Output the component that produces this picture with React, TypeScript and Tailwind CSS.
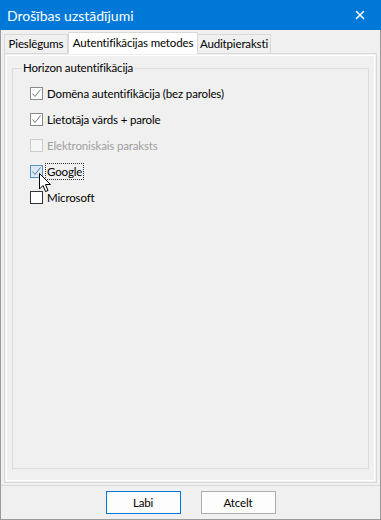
import { IoClose } from "react-icons/io5";

type Item = { label: string; checked: boolean; disabled?: boolean; hover?: boolean; focus?: boolean };

const items: Item[] = [
  { label: "Domēna autentifikācija (bez paroles)", checked: true },
  { label: "Lietotāja vārds + parole", checked: true },
  { label: "Elektroniskais paraksts", checked: false, disabled: true },
  { label: "Google", checked: true, hover: true, focus: true },
  { label: "Microsoft", checked: false },
];

function Check({ item }: { item: Item }) {
  const box = item.disabled
    ? "border-[#cccccc] bg-[#f5f5f5]"
    : item.hover
      ? "border-[#5a8fc4] bg-[#dbe7f3]"
      : item.checked
        ? "border-[#8a8a8a] bg-white"
        : "border-[#333333] bg-white";
  return (
    <div className={"w-[13px] h-[13px] shrink-0 border flex items-center justify-center " + box}>
      {item.checked && (
        <svg width="11" height="11" viewBox="0 0 11 11">
          <path d="M1.5 5.5 L4 8.5 L9.5 1.5" fill="none" stroke={item.hover ? "#5a7fa8" : "#7a7a7a"} strokeWidth="1" />
        </svg>
      )}
    </div>
  );
}

export default function App() {
  return (
    <div className="w-[381px] h-[520px] bg-[#f0f0f0] border-x border-b border-[#9b9b9b] flex flex-col relative font-['Lato',sans-serif] text-[11.5px] tracking-[-0.15px] text-black">
      <div className="h-[30px] shrink-0 bg-[#0078d7] flex items-center justify-between pl-[7px] pr-[13px] -mx-px">
        <span className="text-white text-[14px] tracking-[0px]">Drošības uzstādījumi</span>
        <IoClose className="text-white" size={16} />
      </div>
      <div className="flex items-end h-[22px] px-[3px] mt-[1px] whitespace-nowrap">
        <div className="w-[64px] shrink-0 h-[19px] flex items-center justify-center border border-b-0 border-[#d9d9d9] bg-[#f0f0f0]">Pieslēgums</div>
        <div className="w-[130px] shrink-0 h-[22px] pb-[2px] flex items-center justify-center border border-b-0 border-[#d9d9d9] bg-white relative top-px z-10">Autentifikācijas metodes</div>
        <div className="w-[73px] shrink-0 h-[19px] flex items-center justify-center border border-b-0 border-l-0 border-[#d9d9d9] bg-[#f0f0f0]">Auditpieraksti</div>
      </div>
      <div className="mx-[3px] h-[430px] shrink-0 border border-[#d9d9d9] bg-[#f0f0f0] p-px">
        <div className="h-full border border-white px-[5px] pt-[12px] pb-[11px]">
          <div className="h-full border border-[#dcdcdc] relative">
            <span className="absolute left-[9px] -top-[9px] bg-[#f0f0f0] px-[1px] leading-[16px] whitespace-nowrap">Horizon autentifikācija</span>
            <div className="flex flex-col pl-[17px] pt-[11px]">
              {items.map((it) => (
                <div key={it.label} className="flex items-center h-[26px] whitespace-nowrap">
                  <Check item={it} />
                  <span
                    className={
                      "ml-[3px] px-[1px] leading-[15px] " +
                      (it.disabled ? "text-[#a0a0a0] " : "") +
                      (it.focus ? "outline outline-1 outline-dotted outline-[#333]" : "")
                    }
                  >
                    {it.label}
                  </span>
                </div>
              ))}
            </div>
          </div>
        </div>
      </div>
      <div className="flex-1 flex items-center justify-center gap-[20px] border-t border-[#d9d9d9] mt-[2px]">
        <button className="w-[75px] h-[23px] border border-[#0078d7] bg-[#fdfdfd]">Labi</button>
        <button className="w-[75px] h-[23px] border border-[#adadad] bg-[#fdfdfd]">Atcelt</button>
      </div>
      <svg className="absolute left-[38px] top-[173px]" width="13" height="20" viewBox="0 0 13 20">
        <path d="M0.5 0.5 L0.5 16 L4 12.5 L6.5 18.5 L9 17.5 L6.5 11.5 L11.5 11.5 Z" fill="white" stroke="black" strokeWidth="1" />
      </svg>
    </div>
  );
}
